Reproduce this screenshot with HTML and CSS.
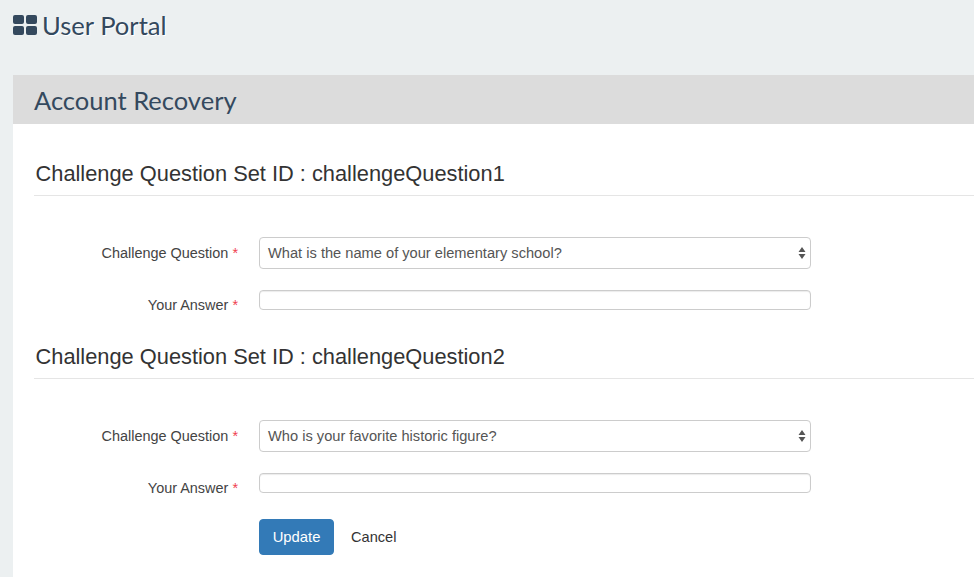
FILE: index.html
```html
<!DOCTYPE html>
<html lang="en">
<head>
<meta charset="utf-8">
<title>User Portal</title>
<link rel="stylesheet" href="styles.css">
</head>
<body>
<header class="topbar">
  <svg class="logo" width="24" height="20" viewBox="0 0 24 20" aria-hidden="true">
    <rect x="0" y="0" width="11" height="9" rx="2"/>
    <rect x="13" y="0" width="11" height="9" rx="2"/>
    <rect x="0" y="11" width="11" height="9" rx="2"/>
    <rect x="13" y="11" width="11" height="9" rx="2"/>
  </svg>
  <span class="brand">User Portal</span>
</header>
<main class="panel">
  <h1 class="panel-title">Account Recovery</h1>
  <div class="panel-body">
    <section class="set">
      <h2 class="set-title">Challenge Question Set ID : challengeQuestion1</h2>
      <div class="row row-select">
        <label class="label">Challenge Question <span class="req">*</span></label>
        <div class="select"><span>What is the name of your elementary school?</span>
          <svg class="arrows" width="8" height="14" viewBox="0 0 8 14" aria-hidden="true"><path d="M4 1 7.500 6H.5zM4 13 .5 8h7z"/></svg>
        </div>
      </div>
      <div class="row row-input">
        <label class="label">Your Answer <span class="req">*</span></label>
        <div class="input"></div>
      </div>
    </section>
    <section class="set">
      <h2 class="set-title">Challenge Question Set ID : challengeQuestion2</h2>
      <div class="row row-select">
        <label class="label">Challenge Question <span class="req">*</span></label>
        <div class="select"><span>Who is your favorite historic figure?</span>
          <svg class="arrows" width="8" height="14" viewBox="0 0 8 14" aria-hidden="true"><path d="M4 1 7.500 6H.5zM4 13 .5 8h7z"/></svg>
        </div>
      </div>
      <div class="row row-input">
        <label class="label">Your Answer <span class="req">*</span></label>
        <div class="input"></div>
      </div>
    </section>
    <div class="actions">
      <button class="btn" type="button">Update</button>
      <a class="cancel">Cancel</a>
    </div>
  </div>
</main>
</body>
</html>
```
FILE: styles.css
```css
* { box-sizing: border-box; }
html, body { margin: 0; height: 577px; overflow: hidden; }
body {
  background: #ecf0f1;
  font-family: "Liberation Sans", Arial, sans-serif;
  color: #333;
  display: flex;
  flex-direction: column;
}
.topbar {
  height: 75px;
  padding: 15px 0 0 13px;
  display: flex;
  align-items: flex-start;
  gap: 5px;
}
.logo { fill: #34495e; flex: none; }
.brand {
  font-family: Lato, sans-serif;
  font-size: 25.6px;
  line-height: 21px;
  color: #34495e;
  text-shadow: 1px 1px 0 #fff;
}
.panel {
  margin-left: 13px;
  flex: 1;
  background: #fff;
  min-height: 0;
}
.panel-title {
  margin: 0;
  height: 49px;
  background: #dcdcdc;
  padding: 0 0 0 21px;
  font-family: Lato, sans-serif;
  font-weight: 400;
  font-size: 25.5px;
  line-height: 51px;
  color: #34495e;
}
.panel-body { padding: 0 0 0 21px; }
.set-title {
  margin: 0;
  height: 37px;
  padding-left: 1.5px;
  font-weight: 400;
  font-size: 21.82px;
  line-height: 30px;
  color: #333;
  border-bottom: 1px solid #e5e5e5;
}
.set:first-child { padding-top: 35px; }
.set:nth-child(2) { padding-top: 32px; }
.row { display: flex; }
.row-select { margin-top: 41px; height: 32px; align-items: center; }
.row-input { margin-top: 21px; height: 20px; align-items: flex-start; }
.label {
  width: 204px;
  text-align: right;
  font-size: 14.45px;
  line-height: 16px;
  color: #444;
}
.row-input .label { padding-top: 7px; }
.req { color: #f0434f; }
.select, .input {
  margin-left: 21px;
  width: 552px;
  border: 1px solid #ccc;
  border-radius: 4px;
  background: #fff;
}
.select {
  height: 32px;
  padding: 0 4px 0 8px;
  display: flex;
  align-items: center;
  justify-content: space-between;
  font-size: 14.65px;
  color: #555;
}
.input { height: 20px; box-shadow: inset 0 1px 1px rgba(0,0,0,.08); }
.arrows { fill: #555; flex: none; }
.actions {
  margin: 26px 0 0 225px;
  display: flex;
  align-items: center;
  gap: 17px;
}
.btn {
  width: 75px;
  height: 36px;
  background: #337ab7;
  border: 1px solid #337ab7;
  border-radius: 4px;
  color: #fff;
  font: 14.8px "Liberation Sans", Arial, sans-serif;
  padding: 0;
}
.cancel { font-size: 14.6px; color: #333; }
```
